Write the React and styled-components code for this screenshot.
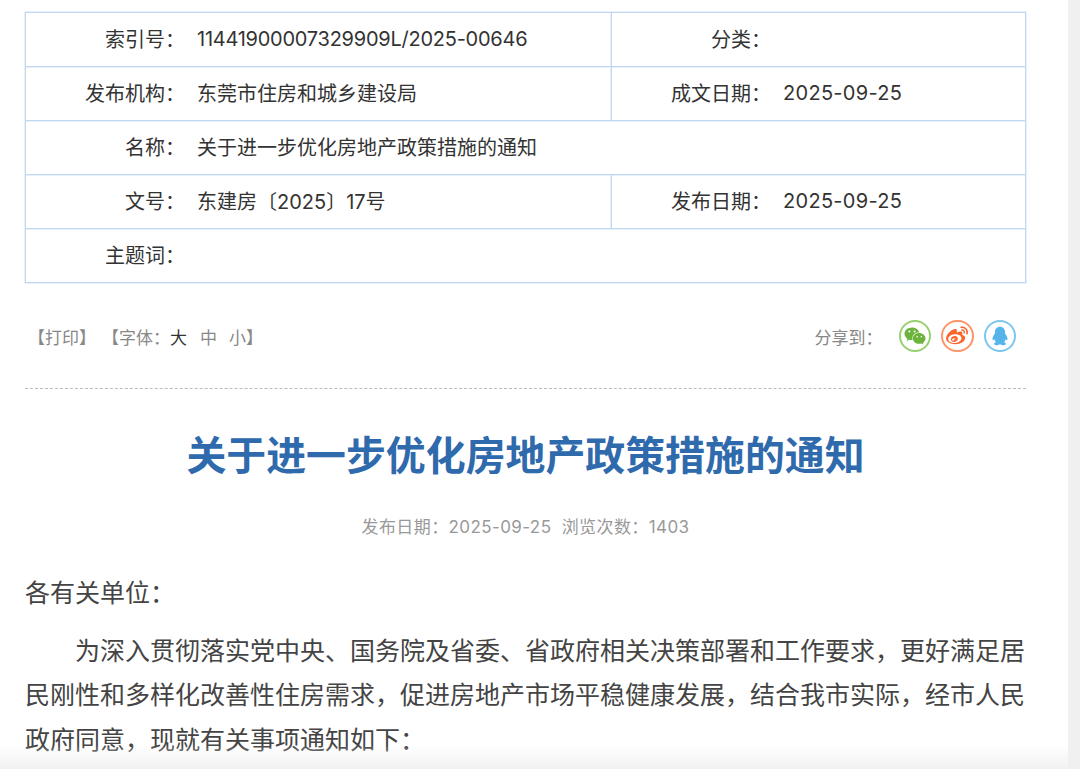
import React from "react";
import styled, { createGlobalStyle } from "styled-components";
import { FaWeixin, FaWeibo } from "react-icons/fa";

const GlobalStyle = createGlobalStyle`
  html, body {
    margin: 0;
    padding: 0;
    height: 100%;
    overflow: hidden;
    background: #f0f0f0;
  }
  body {
    font-family: Inter, "Noto Sans CJK SC", "Noto Sans", sans-serif;
  }
`;

const Page = styled.div`
  position: relative;
  width: 1080px;
  height: 769px;
  overflow: hidden;
  display: flex;
  background: #f0f0f0;
`;

const Sheet = styled.main`
  width: 1068px;
  height: 769px;
  box-sizing: border-box;
  padding: 12px 42px 0 25px;
  background: #fff;
`;

const BottomFade = styled.div`
  position: absolute;
  left: 0;
  right: 0;
  bottom: 0;
  height: 24px;
  background: linear-gradient(rgba(240, 240, 240, 0), rgba(240, 240, 240, 0.9));
`;

const InfoTable = styled.section`
  border: 1px solid #bfd7f1;
  border-bottom: 0;
  box-shadow: 0 0 0 1px #e8f0fa;
`;

const InfoRow = styled.div`
  display: flex;
  height: 54px;
  box-sizing: border-box;
  border-bottom: 1px solid #bfd7f1;
  box-shadow: 0 1px 0 #e8f0fa;
`;

const Cell = styled.div`
  display: flex;
  align-items: center;
  flex: ${(p) => (p.$wide ? "1" : "0 0 585px")};
  box-sizing: border-box;
  padding-bottom: 2px;
  font-size: 20px;
  color: #333;
  & + & {
    border-left: 1px solid #bfd7f1;
    box-shadow: -1px 0 0 #e8f0fa;
    flex: 1;
  }
`;

const Label = styled.span`
  flex: 0 0 159px;
  text-align: right;
  white-space: nowrap;
`;

const Value = styled.span`
  margin-left: 12px;
  letter-spacing: ${(p) => p.$spacing || 0}px;
  white-space: nowrap;
`;

const Toolbar = styled.div`
  display: flex;
  align-items: center;
  justify-content: space-between;
  height: 106px;
  box-sizing: border-box;
  padding: 1px 10px 0 3px;
  border-bottom: 1px dashed #bbb;
  font-size: 17px;
  color: #888;
`;

const ToolGroup = styled.div`
  display: flex;
  align-items: center;
`;

const Bracket = styled.span`
  margin-left: ${(p) => p.$offset || 0}px;
  white-space: nowrap;
`;

const SizeOption = styled.span`
  margin-left: ${(p) => p.$gap || 0}px;
  color: ${(p) => (p.$active ? "#333" : "#888")};
`;

const ShareLabel = styled.span`
  margin-right: 16px;
`;

const ShareButton = styled.span`
  display: flex;
  align-items: center;
  justify-content: center;
  width: 32.5px;
  height: 32.5px;
  box-sizing: border-box;
  margin-left: ${(p) => (p.$first ? 0 : 10)}px;
  border: 2px solid ${(p) => p.$ring};
  border-radius: 50%;
  color: ${(p) => p.$color};
  font-size: ${(p) => p.$size}px;
`;

const Title = styled.h1`
  margin: 38px 0 0;
  font-size: 39.9px;
  line-height: 58px;
  font-weight: 700;
  text-align: center;
  color: #2f6aad;
`;

const Meta = styled.p`
  margin: 30px 0 0;
  font-size: 17px;
  line-height: 24px;
  letter-spacing: 0.4px;
  text-align: center;
  color: #999;
`;

const Body = styled.article`
  margin-top: 32px;
  font-size: 25px;
  line-height: 44.5px;
  color: #444;
`;

const Para = styled.p`
  margin: ${(p) => (p.$lead ? "0 0 13px" : "0")};
  text-indent: ${(p) => (p.$lead ? 0 : 50)}px;
`;

const COLON = "\uFF1A";
const COMMA = "\uFF0C";

const intro = [
  "为深入贯彻落实党中央、国务院及省委、省政府相关决策部署和工作要求",
  "更好满足居民刚性和多样化改善性住房需求",
  "促进房地产市场平稳健康发展",
  "结合我市实际",
  "经市人民政府同意",
  "现就有关事项通知如下" + COLON,
].join(COMMA);

const rows = [
  [
    { label: "索引号", value: "11441900007329909L/2025-00646", spacing: -0.25 },
    { label: "分类" },
  ],
  [
    { label: "发布机构", value: "东莞市住房和城乡建设局" },
    { label: "成文日期", value: "2025-09-25", spacing: 0.3 },
  ],
  [{ label: "名称", value: "关于进一步优化房地产政策措施的通知" }],
  [
    { label: "文号", value: "东建房〔2025〕17号" },
    { label: "发布日期", value: "2025-09-25", spacing: 0.3 },
  ],
  [{ label: "主题词" }],
];

function PenguinIcon() {
  return (
    <svg width="22" height="22" viewBox="0 0 24 24" fill="currentColor">
      <path d="M12 2C8.5 2 6.5 4.6 6.5 8v1.2C5 11 3.6 13.6 3.8 15.8c.1 1 .8 1 1.9-.2.4 1.3 1 2.3 1.9 3.1-1.3.5-2.1 1.1-2.1 1.9 0 1 1.8 1.4 3.6 1.4 1.2 0 2.2-.3 2.9-.9.7.6 1.7.9 2.9.9 1.8 0 3.6-.4 3.6-1.4 0-.8-.8-1.4-2.1-1.9.9-.8 1.5-1.8 1.9-3.1 1.1 1.2 1.8 1.2 1.9.2.2-2.2-1.2-4.8-2.7-6.6V8C17.5 4.6 15.5 2 12 2Z" />
    </svg>
  );
}

export default function App() {
  return (
    <Page>
      <GlobalStyle />
      <Sheet>
        <InfoTable>
          {rows.map((row, i) => (
            <InfoRow key={i}>
              {row.map((cell, j) => (
                <Cell key={j} $wide={row.length === 1}>
                  <Label>
                    {cell.label}
                    {COLON}
                  </Label>
                  {cell.value && <Value $spacing={cell.spacing}>{cell.value}</Value>}
                </Cell>
              ))}
            </InfoRow>
          ))}
        </InfoTable>

        <Toolbar>
          <ToolGroup>
            <Bracket>【打印】</Bracket>
            <Bracket $offset={6}>【字体{COLON}</Bracket>
            <SizeOption $active>大</SizeOption>
            <SizeOption $gap={13}>中</SizeOption>
            <SizeOption $gap={12}>小</SizeOption>
            <span>】</span>
          </ToolGroup>
          <ToolGroup>
            <ShareLabel>分享到{COLON}</ShareLabel>
            <ShareButton $first $ring="#98d070" $color="#6cb33e" $size={22}>
              <FaWeixin />
            </ShareButton>
            <ShareButton $ring="#ff9468" $color="#f9662e" $size={22}>
              <FaWeibo />
            </ShareButton>
            <ShareButton $ring="#7cc6f0" $color="#55b5ea">
              <PenguinIcon />
            </ShareButton>
          </ToolGroup>
        </Toolbar>

        <Title>关于进一步优化房地产政策措施的通知</Title>
        <Meta>
          发布日期{COLON}2025-09-25&nbsp;&nbsp;浏览次数{COLON}1403
        </Meta>

        <Body>
          <Para $lead>各有关单位{COLON}</Para>
          <Para>{intro}</Para>
        </Body>
      </Sheet>
      <BottomFade />
    </Page>
  );
}
